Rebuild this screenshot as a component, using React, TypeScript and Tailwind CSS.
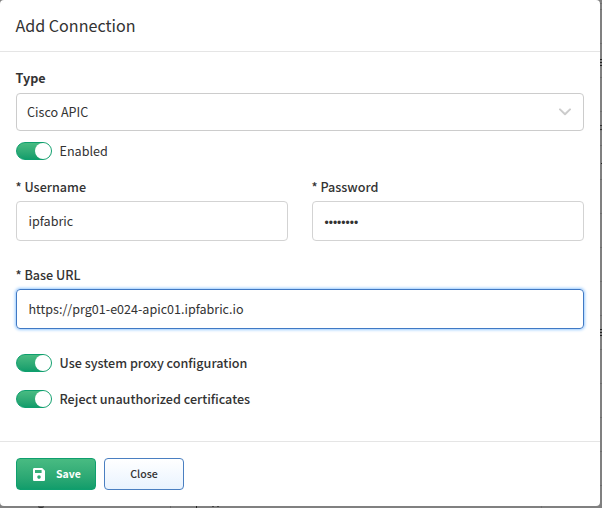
import type { ReactNode } from "react";

function Toggle({ label, className }: { label: string; className: string }) {
  return (
    <div className="flex h-[18px] items-center gap-[7.5px]">
      <div className="flex h-[18px] w-9 shrink-0 items-center justify-end rounded-full border border-[#0f9f6e] bg-linear-to-b from-[#48bb82] to-[#109d6b]">
        <div className="size-4 rounded-full bg-white" />
      </div>
      <span className={`whitespace-nowrap leading-[18px] ${className}`}>{label}</span>
    </div>
  );
}

function Label({ children, className = "" }: { children: ReactNode; className?: string }) {
  return <div className={`h-[18px] whitespace-nowrap text-[12.6px] leading-[18px] ${className}`}>{children}</div>;
}

const rowLines = ["h-[34px]", "h-[34px]", "h-[34px]", "h-[34px]", "h-[34px]", "h-[34px]", "h-[34px]", "h-[34px]", "h-[34px]", "h-[34px]", "h-[34px]", "h-[34px]", "h-[34px]", "h-[34px]"];

function Backdrop() {
  return (
    <div className="absolute inset-0 overflow-hidden bg-[#808080]">
      <div className="flex flex-col items-end">
        <div className="h-1 w-1 shrink-0 border-b border-[#6d6d6d]" />
        <div className="h-1.5 w-1 shrink-0 border-b border-[#6d6d6d]" />
        {rowLines.map((h, i) => (
          <div key={i} className={`w-1 shrink-0 border-b border-[#6d6d6d] ${h}`} />
        ))}
      </div>
      <div className="absolute right-0 top-[59px] h-[7px] w-1 bg-[repeating-linear-gradient(#222_0_1px,#808080_1px_3px)]" />
      <div className="absolute right-0 top-[125px] h-1.5 w-1 bg-[repeating-linear-gradient(#333_0_1px,#777_1px_4px)]" />
      <div className="absolute right-0 top-[163px] size-px bg-[#222]" />
      <div className="absolute right-0 top-[329px] h-[7px] w-1 bg-[repeating-linear-gradient(#222_0_1px,#808080_1px_3px)]" />
      <div className="absolute left-[38px] top-[506px] h-0.5 w-[6px] rounded-b-full border-b border-[#333] bg-[#606060]" />
      <div className="absolute left-[170px] top-[506px] h-0.5 w-px bg-[#686868]" />
      <div className="absolute left-[196px] top-[506px] h-0.5 w-px bg-[#222]" />
      <div className="absolute left-[212px] top-[506px] h-px w-0.5 bg-[#444]" />
      <div className="absolute left-[217px] top-[506px] h-px w-0.5 bg-[#444]" />
      <div className="absolute left-[541px] top-[506px] h-0.5 w-px bg-[#707070]" />
    </div>
  );
}

export default function App() {
  return (
    <div className="relative h-[508px] w-[602px] overflow-hidden font-['Noto_Sans_CJK_SC','Noto_Sans_CJK_JP',sans-serif] text-[#333]">
      <Backdrop />
      <div className="relative flex h-[506px] w-[600px] flex-col rounded-[4px] bg-white">
        <header className="h-[52px] shrink-0 border-b border-[#e5e5e5] px-[15.5px] pt-[13px]">
          <h1 className="whitespace-nowrap text-[16.1px] leading-6">Add Connection</h1>
        </header>
        <main className="flex h-[389px] shrink-0 flex-col px-4 pt-[17px]">
          <Label className="-ml-[0.5px] font-bold">Type</Label>
          <div className="mt-[6px] flex h-[38px] items-center justify-between rounded-[4px] border border-[#ccc] pl-2.5 pr-3">
            <span className="text-[12.6px]">Cisco APIC</span>
            <svg className="h-2 w-3" viewBox="0 0 12 8" fill="none" stroke="#ccc" strokeWidth="2" strokeLinecap="round" strokeLinejoin="round">
              <path d="M1 1.4 6 6.2 11 1.4" />
            </svg>
          </div>
          <div className="mt-[11px]"><Toggle label="Enabled" className="text-[12.6px]" /></div>
          <div className="mt-[18px] grid grid-cols-2 gap-6">
            <div>
              <Label className="-ml-[0.5px] font-medium">* Username</Label>
              <div className="mt-[5px] flex h-10 items-center rounded-[4px] border border-[#d3d3d3] px-[11.5px] text-[12.6px]">ipfabric</div>
            </div>
            <div>
              <Label className="-ml-[0.5px] font-medium">* Password</Label>
              <div className="mt-[5px] flex h-10 items-center rounded-[4px] border border-[#d3d3d3] px-[11.5px] pt-[3px] font-['Liberation_Sans',sans-serif] text-[12px]">••••••••</div>
            </div>
          </div>
          <Label className="-ml-[0.5px] mt-[25px] font-medium">* Base URL</Label>
          <div className="mt-[5px] flex h-10 shrink-0 items-center rounded-[4px] border border-[#4079c4] px-[11.5px] text-[12.55px] shadow-[0_0_3px_1px_#9acbff]">https://prg01-e024-apic01.ipfabric.io</div>
          <div className="mt-[25px] flex flex-col gap-[18px]">
            <Toggle label="Use system proxy configuration" className="text-[12.6px] font-medium" />
            <Toggle label="Reject unauthorized certificates" className="text-[12.6px] font-medium" />
          </div>
        </main>
        <footer className="flex h-[65px] shrink-0 gap-2 border-t border-[#e5e5e5] px-4 pt-4">
          <button className="flex h-8 w-20 items-center rounded-[4px] border border-[#0f9f6e] bg-linear-to-b from-[#48bb82] to-[#109d6b] pl-4 text-[10.5px] font-bold text-white">
            <svg className="mt-px h-[13px] w-3" viewBox="0 0 12 13">
              <path fill="white" fillRule="evenodd" d="M1.3 0h7.9L12 2.8v8.9c0 .7-.6 1.3-1.3 1.3H1.3C.6 13 0 12.4 0 11.7V1.3C0 .6.6 0 1.3 0ZM2 2v3h6.6V2H2Zm4 5.3a1.8 1.8 0 1 0 0 3.6 1.8 1.8 0 0 0 0-3.6Z" />
            </svg>
            <span className="ml-[11px]">Save</span>
          </button>
          <button className="flex h-8 w-20 items-center justify-center rounded-[4px] border border-[#4a7fc1] bg-linear-to-b from-white to-[#e9f3fe] text-[10.6px] font-medium">Close</button>
        </footer>
      </div>
    </div>
  );
}
